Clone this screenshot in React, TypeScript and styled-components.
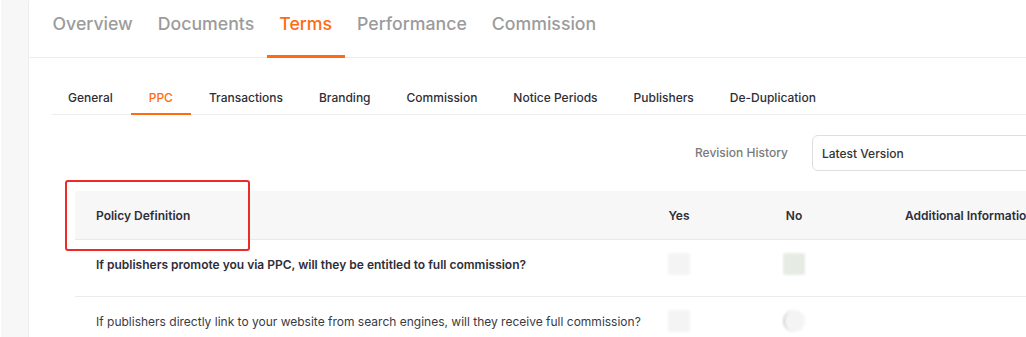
import React, { useState } from 'react';
import styled, { createGlobalStyle } from 'styled-components';

const GlobalStyle = createGlobalStyle`
  html, body {
    margin: 0;
    padding: 0;
    background: #f7f7f7;
    font-family: Inter, "Noto Sans", Arial, sans-serif;
    overflow: hidden;
  }
`;

const mainTabs = ['Overview', 'Documents', 'Terms', 'Performance', 'Commission'];
const subTabs = ['General', 'PPC', 'Transactions', 'Branding', 'Commission', 'Notice Periods', 'Publishers', 'De-Duplication'];

interface Policy {
  question: string;
  strong: boolean;
}

const policies: Policy[] = [
  { question: 'If publishers promote you via PPC, will they be entitled to full commission?', strong: true },
  { question: 'If publishers directly link to your website from search engines, will they receive full commission?', strong: false },
];

const App = () => {
  const [mainTab, setMainTab] = useState('Terms');
  const [subTab, setSubTab] = useState('PPC');

  return (
    <>
      <GlobalStyle />
      <Page>
        <Card>
          <MainTabBar>
            {mainTabs.map((t) => (
              <MainTab key={t} $active={t === mainTab} onClick={() => setMainTab(t)}>
                {t}
              </MainTab>
            ))}
          </MainTabBar>

          <Content>
            <SubTabBar>
              {subTabs.map((t) => (
                <SubTab key={t} $active={t === subTab} onClick={() => setSubTab(t)}>
                  {t}
                </SubTab>
              ))}
            </SubTabBar>

            <RevisionRow>
              <RevisionLabel>Revision History</RevisionLabel>
              <VersionSelect>Latest Version</VersionSelect>
            </RevisionRow>

            <Table>
              <HeaderRow>
                <HeadCell>
                  Policy Definition
                  <Highlight />
                </HeadCell>
                <HeadCell $center>Yes</HeadCell>
                <HeadCell $center>No</HeadCell>
                <HeadCell $extra>Additional Information</HeadCell>
              </HeaderRow>
              {policies.map((p, i) => (
                <Row key={i}>
                  <Question $strong={p.strong}>{p.question}</Question>
                  <RadioCell>
                    <BlurRadio $tint={false} $ring={false} />
                  </RadioCell>
                  <RadioCell>
                    <BlurRadio $tint={i === 0} $ring={i === 1} />
                  </RadioCell>
                  <div />
                </Row>
              ))}
            </Table>
          </Content>
        </Card>
      </Page>
    </>
  );
};

export default App;

const Page = styled.div`
  display: flex;
  height: 100vh;
  padding-left: 27px;
  border-left: 1px solid #ffffff;
  overflow: hidden;
`;

const Card = styled.div`
  flex: 1;
  margin-top: -6px;
  padding-top: 6px;
  min-width: 1080px;
  background: #ffffff;
  border-left: 1px solid #ececec;
  border-top-left-radius: 10px;
`;

const MainTabBar = styled.div`
  display: flex;
  height: 58px;
  padding-left: 11px;
  border-bottom: 1px solid #ededed;
  box-sizing: border-box;
`;

const MainTab = styled.div<{ $active: boolean }>`
  display: flex;
  align-items: center;
  padding: 0 12.5px 8px;
  font-size: 17.7px;
  font-weight: 500;
  color: ${(p) => (p.$active ? '#ff6a13' : '#9b9b9b')};
  border-bottom: 3px solid ${(p) => (p.$active ? '#ff6a13' : 'transparent')};
  margin-bottom: -1px;
  cursor: pointer;
`;

const Content = styled.div`
  padding: 20px 0 0 23px;
`;

const SubTabBar = styled.div`
  display: flex;
  height: 36px;
  border-bottom: 1px solid #ededed;
`;

const SubTab = styled.div<{ $active: boolean }>`
  display: flex;
  align-items: center;
  padding: 4px 18px 0;
  font-size: 12px;
  font-weight: 500;
  color: ${(p) => (p.$active ? '#ff6a13' : '#2e2e38')};
  border-bottom: 2px solid ${(p) => (p.$active ? '#ff6a13' : 'transparent')};
  margin-bottom: -1px;
  cursor: pointer;

  &:first-child {
    margin-left: -2px;
  }
`;

const RevisionRow = styled.div`
  display: flex;
  align-items: center;
  margin-top: 20px;
  padding-left: 643px;
  gap: 24px;
`;

const RevisionLabel = styled.div`
  font-size: 12px;
  font-weight: 500;
  color: #7a7a7a;
  margin-top: -2px;
`;

const VersionSelect = styled.div`
  width: 260px;
  height: 36px;
  box-sizing: border-box;
  border: 1px solid #dedede;
  border-radius: 6px;
  display: flex;
  align-items: center;
  padding-left: 9px;
  font-size: 12px;
  font-weight: 500;
  color: #333333;
`;

const Table = styled.div`
  margin: 20px 0 0 23px;
`;

const gridCols = '544px 120px 110px 1fr';

const HeaderRow = styled.div`
  display: grid;
  grid-template-columns: ${gridCols};
  height: 49px;
  box-sizing: border-box;
  background: #f7f7f7;
  border-bottom: 1px solid #e9e9e9;
`;

const HeadCell = styled.div<{ $center?: boolean; $extra?: boolean }>`
  position: relative;
  display: flex;
  align-items: center;
  justify-content: ${(p) => (p.$center ? 'center' : 'flex-start')};
  padding-left: ${(p) => (p.$center ? '0' : p.$extra ? '56px' : '21px')};
  font-size: 12px;
  font-weight: 600;
  color: #2e2e38;
  white-space: nowrap;
`;

const Highlight = styled.span`
  position: absolute;
  left: -10px;
  top: -11px;
  width: 185px;
  height: 71px;
  box-sizing: border-box;
  border: 2.5px solid #ec2a2a;
  border-radius: 3px;
`;

const Row = styled.div`
  display: grid;
  grid-template-columns: ${gridCols};
  height: 57px;
  box-sizing: border-box;
  border-bottom: 1px solid #ebebeb;
`;

const Question = styled.div<{ $strong: boolean }>`
  padding: 16px 0 0 21px;
  font-size: 12px;
  line-height: 17px;
  font-weight: ${(p) => (p.$strong ? 600 : 400)};
  color: ${(p) => (p.$strong ? '#2e2e38' : '#3a3a44')};
  white-space: nowrap;
`;

const RadioCell = styled.div`
  display: flex;
  justify-content: center;
  padding-top: 13px;
`;

const BlurRadio = styled.div<{ $tint: boolean; $ring: boolean }>`
  width: 22px;
  height: 22px;
  box-sizing: border-box;
  background: ${(p) => (p.$tint ? '#e4ebe2' : '#f3f3f3')};
  border-radius: ${(p) => (p.$ring ? '50%' : '2px')};
  border-left: ${(p) => (p.$ring ? '2px solid #d0d0d0' : 'none')};
  filter: blur(1px);
  opacity: 0.9;
`;
